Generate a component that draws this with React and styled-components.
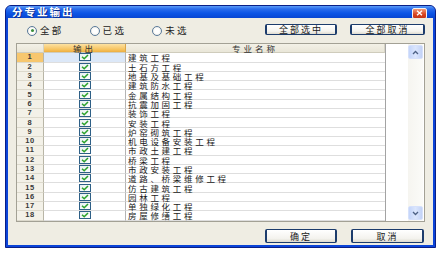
import styled, { createGlobalStyle } from "styled-components";

const GlobalStyle = createGlobalStyle`
  body {
    margin: 0;
    background: #fff;
    font-family: "Noto Sans CJK SC", "Liberation Sans", sans-serif;
  }
`;

const Page = styled.div`
  width: 444px;
  height: 254px;
  padding: 5px 0 0 5px;
  box-sizing: border-box;
`;

const Window = styled.div`
  width: 431px;
  height: 243px;
  display: flex;
  flex-direction: column;
  background: #0b44d8;
  border: 1px solid #0a1f86;
  border-radius: 6px 6px 0 0;
  box-sizing: border-box;
  overflow: hidden;
`;

const TitleBar = styled.div`
  height: 12px;
  display: flex;
  align-items: center;
  justify-content: space-between;
  padding: 0 8px 0 6px;
  background: linear-gradient(#5a9cf8 0%, #2a6cec 25%, #0c55e6 60%, #0846d2 100%);
`;

const Title = styled.span`
  color: #fff;
  font-size: 10.5px;
  font-weight: bold;
  letter-spacing: 2px;
  line-height: 12px;
  text-shadow: 1px 1px 0 #0a2a8a;
`;

const CloseBtn = styled.div`
  width: 15px;
  height: 11px;
  margin-top: 2px;
  border: 1px solid #f4f4f4;
  border-radius: 2px;
  background: linear-gradient(#f09a78, #d8431f 60%, #c2361a);
  box-sizing: border-box;
  display: flex;
  align-items: center;
  justify-content: center;
`;

const Body = styled.div`
  flex: 1;
  margin: 0 2px 2px 2px;
  background: #efede3;
  display: flex;
  flex-direction: column;
  padding: 0 8px 0 8px;
`;

const Toolbar = styled.div`
  height: 25px;
  display: flex;
  align-items: center;
  justify-content: space-between;
  padding: 0 0 2px 11px;
  box-sizing: border-box;
`;

const RadioGroup = styled.div`
  display: flex;
  align-items: center;
  gap: 26px;
  margin-top: 2px;
`;

const RadioLabel = styled.label`
  display: flex;
  align-items: center;
  gap: 3px;
  font-size: 9.5px;
  line-height: 11px;
  letter-spacing: 2.3px;
  color: #222;
`;

const RadioCircle = styled.span`
  width: 8px;
  height: 8px;
  border-radius: 50%;
  border: 1px solid #5a7a9a;
  background: radial-gradient(circle, #fff 40%, #e4e2d8 100%);
  display: flex;
  align-items: center;
  justify-content: center;
  &::after {
    content: "";
    width: 3px;
    height: 3px;
    border-radius: 50%;
    background: ${(p) => (p.$on ? "#3c8f3c" : "transparent")};
  }
`;

const ButtonGroup = styled.div`
  display: flex;
  gap: ${(p) => p.$gap}px;
`;

const Button = styled.button`
  width: ${(p) => p.$w}px;
  height: ${(p) => p.$h}px;
  padding: 0;
  border: 1px solid #1c3c6c;
  border-left-width: 2px;
  border-right-width: 2px;
  border-radius: 2px;
  background: linear-gradient(#ffffff, #f4f3ee 70%, #dedbd0);
  font-family: "Noto Sans CJK SC", sans-serif;
  font-size: 9px;
  letter-spacing: 2px;
  line-height: 9px;
  color: #1a1a1a;
  display: flex;
  align-items: center;
  justify-content: center;
`;

const GridBox = styled.div`
  height: 179px;
  display: flex;
  border: 1px solid #a3a195;
  background: #fff;
  overflow: hidden;
  box-sizing: border-box;
`;

const Table = styled.div`
  width: 368px;
  display: grid;
  grid-template-columns: 27px 82px 259px;
  grid-auto-rows: 9.3px;
  align-content: start;
  border-right: 1px solid #a3a3a3;
`;

const HeadCell = styled.div`
  display: flex;
  align-items: center;
  justify-content: center;
  font-size: 8.5px;
  line-height: 9px;
  letter-spacing: 3px;
  color: #333;
  background: ${(p) =>
    p.$active
      ? "linear-gradient(#fde2a2, #f6c25e 70%, #eeae3e)"
      : "linear-gradient(#f3f1e7, #e9e6d8)"};
  border-right: 1px solid ${(p) => (p.$active ? "#d9a64a" : "#d6d3c4")};
  border-bottom: 1px solid #cfccbc;
  box-sizing: border-box;
`;

const NumCell = styled.div`
  display: flex;
  align-items: center;
  justify-content: center;
  font-family: "Liberation Sans", sans-serif;
  font-size: 7.5px;
  line-height: 8px;
  font-weight: bold;
  letter-spacing: 0.6px;
  color: #3a3a3a;
  background: ${(p) => (p.$active ? "#f7c76e" : "#f3f1e8")};
  border-right: 1px solid #b8b5a6;
  border-bottom: 1px solid #dcd9cc;
  box-sizing: border-box;
`;

const CheckCell = styled.div`
  display: flex;
  align-items: center;
  justify-content: center;
  background: ${(p) => (p.$active ? "#dce8f8" : "#fff")};
  border-right: 1px solid #b4b4b4;
  border-bottom: 1px solid #dedede;
  box-sizing: border-box;
`;

const NameCell = styled.div`
  display: flex;
  align-items: center;
  padding-left: 2px;
  font-size: 8.5px;
  letter-spacing: 2.7px;
  line-height: 8px;
  color: #1a1a1a;
  white-space: nowrap;
  border-bottom: 1px solid #dedede;
  box-sizing: border-box;
`;

const ScrollZone = styled.div`
  flex: 1;
  display: flex;
  justify-content: flex-end;
  padding-right: 1px;
`;

const ScrollBar = styled.div`
  width: 15px;
  display: flex;
  flex-direction: column;
  justify-content: space-between;
  background: linear-gradient(90deg, #f6f5f0, #fbfbf8);
  padding: 1px 0 1px 0;
`;

const ArrowBtn = styled.div`
  height: 14px;
  border-radius: 2px;
  background: linear-gradient(90deg, #c4d5fa, #dbe6fd 50%, #c2d2f6);
  border: 1px solid #d6e1fb;
  box-sizing: border-box;
  display: flex;
  align-items: center;
  justify-content: center;
`;

const Footer = styled.div`
  flex: 1;
  display: flex;
  justify-content: flex-end;
  align-items: flex-start;
  padding: 7px 1px 0 0;
`;

const rows = [
  "建筑工程",
  "土石方工程",
  "地基及基础工程",
  "建筑防水工程",
  "金属结构工程",
  "抗震加固工程",
  "装饰工程",
  "安装工程",
  "炉窑砌筑工程",
  "机电设备安装工程",
  "市政土建工程",
  "桥梁工程",
  "市政安装工程",
  "道路、桥梁维修工程",
  "仿古建筑工程",
  "园林工程",
  "单独绿化工程",
  "房屋修缮工程",
];

function CheckBox() {
  return (
    <svg width="12" height="8" viewBox="0 0 12 8">
      <defs>
        <linearGradient id="cb" x1="0" y1="0" x2="1" y2="1">
          <stop offset="0" stopColor="#e6eef0" />
          <stop offset="1" stopColor="#ffffff" />
        </linearGradient>
      </defs>
      <rect x="0.5" y="0.5" width="11" height="7" fill="url(#cb)" stroke="#2e5f86" />
      <path d="M3 3.8 L5.2 5.8 L9 2" fill="none" stroke="#2aa12a" strokeWidth="1.5" />
    </svg>
  );
}

function Chevron({ up }) {
  return (
    <svg width="7" height="5" viewBox="0 0 7 5">
      <path
        d={up ? "M1 4 L3.5 1.5 L6 4" : "M1 1 L3.5 3.5 L6 1"}
        fill="none"
        stroke="#4d6185"
        strokeWidth="1.3"
      />
    </svg>
  );
}

function Row({ n, name, active }) {
  return (
    <>
      <NumCell $active={active}>{n}</NumCell>
      <CheckCell $active={active}>
        <CheckBox />
      </CheckCell>
      <NameCell>{name}</NameCell>
    </>
  );
}

export default function App() {
  return (
    <Page>
      <GlobalStyle />
      <Window>
        <TitleBar>
          <Title>分专业输出</Title>
          <CloseBtn>
            <svg width="7" height="6" viewBox="0 0 7 6">
              <path d="M1 0.8 L6 5.2 M6 0.8 L1 5.2" stroke="#fff" strokeWidth="1.4" />
            </svg>
          </CloseBtn>
        </TitleBar>
        <Body>
          <Toolbar>
            <RadioGroup>
              <RadioLabel>
                <RadioCircle $on />
                全部
              </RadioLabel>
              <RadioLabel>
                <RadioCircle />
                已选
              </RadioLabel>
              <RadioLabel>
                <RadioCircle />
                未选
              </RadioLabel>
            </RadioGroup>
            <ButtonGroup $gap={13}>
              <Button $w={72} $h={11}>全部选中</Button>
              <Button $w={75} $h={11}>全部取消</Button>
            </ButtonGroup>
          </Toolbar>
          <GridBox>
            <Table>
              <HeadCell />
              <HeadCell $active>输出</HeadCell>
              <HeadCell>专业名称</HeadCell>
              {rows.map((name, i) => (
                <Row key={i} n={i + 1} name={name} active={i === 0} />
              ))}
            </Table>
            <ScrollZone>
              <ScrollBar>
                <ArrowBtn>
                  <Chevron up />
                </ArrowBtn>
                <ArrowBtn>
                  <Chevron />
                </ArrowBtn>
              </ScrollBar>
            </ScrollZone>
          </GridBox>
          <Footer>
            <ButtonGroup $gap={14}>
              <Button $w={72} $h={14}>确定</Button>
              <Button $w={73} $h={14}>取消</Button>
            </ButtonGroup>
          </Footer>
        </Body>
      </Window>
    </Page>
  );
}
